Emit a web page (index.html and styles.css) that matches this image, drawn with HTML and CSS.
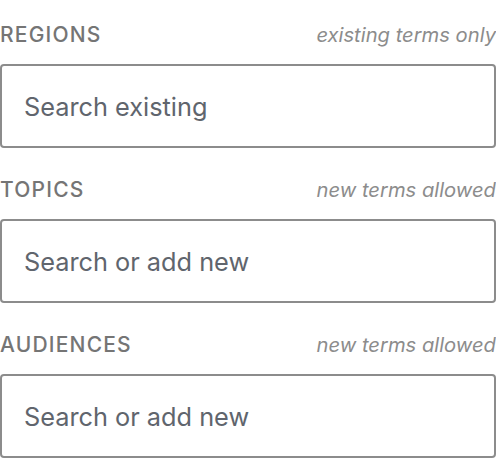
FILE: index.html
```html
<!DOCTYPE html>
<html>
<head>
<meta charset="utf-8">
<link rel="stylesheet" href="styles.css">
</head>
<body>
<div class="fields">
  <div class="field">
    <div class="field-head">
      <span class="field-label">Regions</span>
      <span class="field-hint">existing terms only</span>
    </div>
    <input class="field-input" type="text" placeholder="Search existing">
  </div>
  <div class="field">
    <div class="field-head">
      <span class="field-label">Topics</span>
      <span class="field-hint">new terms allowed</span>
    </div>
    <input class="field-input" type="text" placeholder="Search or add new">
  </div>
  <div class="field">
    <div class="field-head">
      <span class="field-label">Audiences</span>
      <span class="field-hint">new terms allowed</span>
    </div>
    <input class="field-input" type="text" placeholder="Search or add new">
  </div>
</div>
</body>
</html>
```
FILE: styles.css
```css
html, body {
  margin: 0;
  padding: 0;
  background: #ffffff;
}
body {
  font-family: Inter, "Noto Sans", "Liberation Sans", sans-serif;
}
.fields {
  display: flex;
  flex-direction: column;
  gap: 30px;
  padding-top: 23px;
}
.field {
  display: flex;
  flex-direction: column;
  gap: 17px;
}
.field-head {
  display: flex;
  justify-content: space-between;
  align-items: baseline;
  height: 24px;
  line-height: 24px;
}
.field-label {
  font-size: 21px;
  font-weight: 500;
  letter-spacing: 1.2px;
  text-transform: uppercase;
  color: #757575;
}
.field-hint {
  font-size: 20.2px;
  font-style: italic;
  color: #8c8c8c;
}
.field-input {
  box-sizing: border-box;
  width: 100%;
  height: 84px;
  margin: 0;
  padding: 0 22px;
  border: 2px solid #8c8c8c;
  border-radius: 4px;
  font-family: inherit;
  font-size: 25.3px;
  color: #1e1e1e;
  background: #fff;
  outline: none;
}
.field-input::placeholder {
  color: #60656d;
  opacity: 1;
}
```
